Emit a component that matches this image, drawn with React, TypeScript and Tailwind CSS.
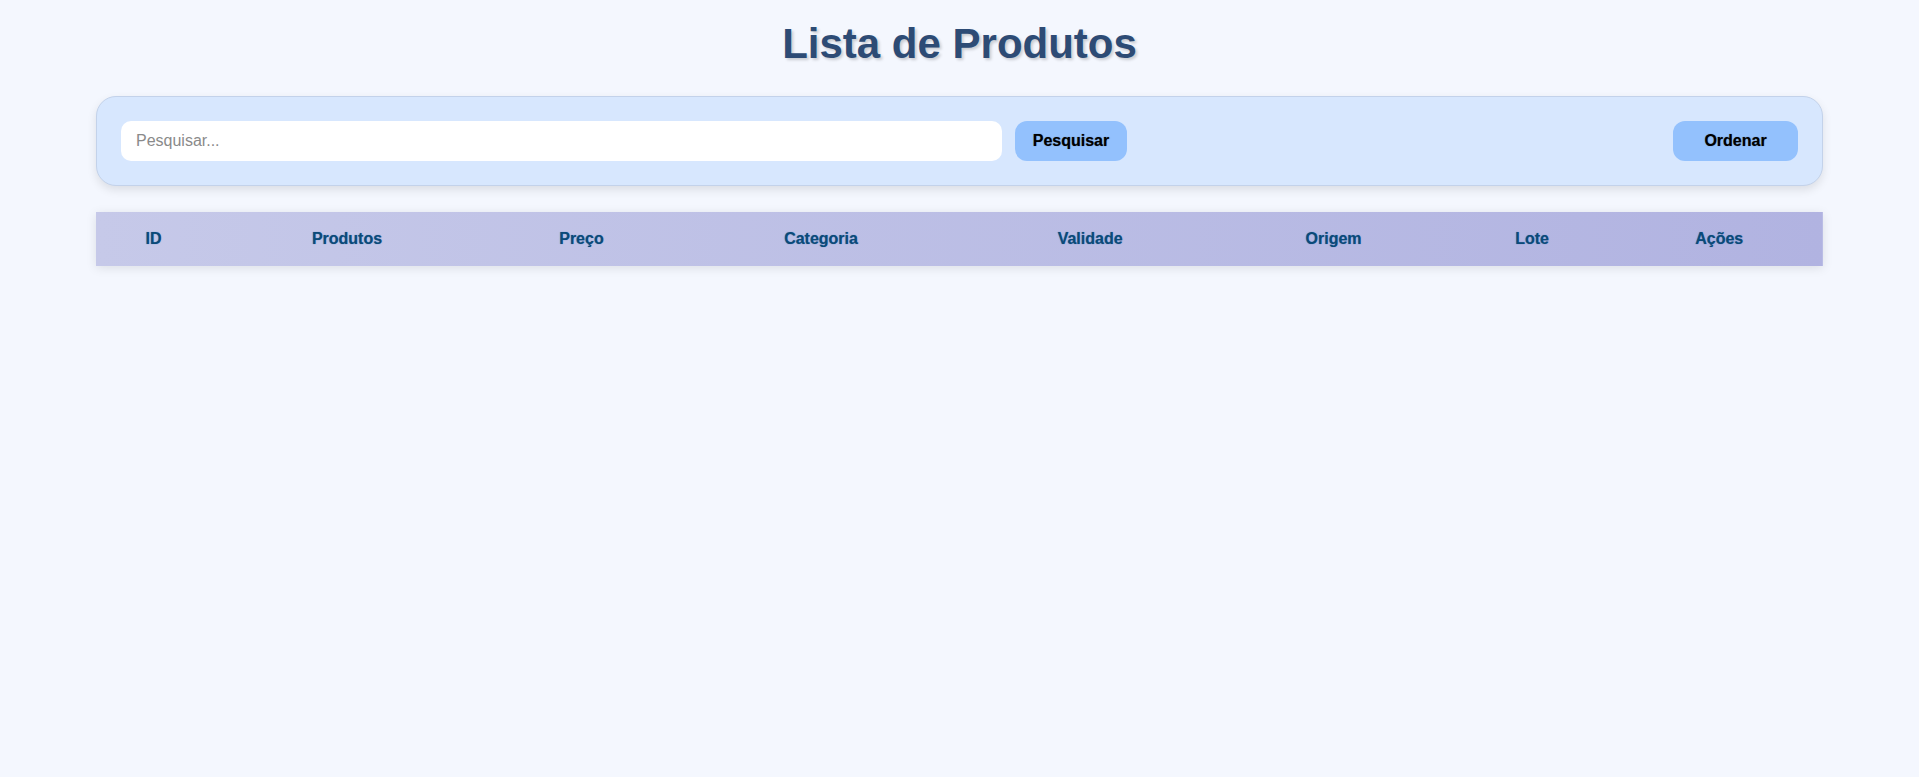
const columns = ["ID", "Produtos", "Preço", "Categoria", "Validade", "Origem", "Lote", "Ações"];

const App = () => {
  return (
    <div className="min-h-screen bg-[#f4f7fe] pt-[20px] font-['Liberation_Sans',Arial,sans-serif]">
      <h1 className="mb-[28px] text-center text-[42px] leading-[1.15] font-bold text-[#2d4b75] [text-shadow:2px_2px_3px_rgba(0,0,0,0.18)]">
        Lista de Produtos
      </h1>

      <div className="mx-auto w-[90%] rounded-[20px] border border-[#c3d2ea] bg-[#d7e7fe] p-6 shadow-[0_4px_10px_rgba(0,0,0,0.1)]">
        <div className="flex items-center">
          <input
            type="text"
            placeholder="Pesquisar..."
            className="h-10 w-[881px] rounded-[10px] bg-white px-[15px] text-base text-[#333] outline-none placeholder:text-[#8a8a8a]"
          />
          <button className="ml-[13px] h-10 w-[112px] rounded-xl bg-[#93c1fd] text-base font-bold text-black [text-shadow:0_0_1px_rgba(0,0,0,0.5)]">
            Pesquisar
          </button>
          <button className="ml-auto h-10 w-[125px] rounded-xl bg-[#93c1fd] text-base font-bold text-black [text-shadow:0_0_1px_rgba(0,0,0,0.5)]">
            Ordenar
          </button>
        </div>
      </div>

      <div className="mx-auto mt-[26px] w-[90%] shadow-[0_2px_10px_rgba(0,0,0,0.1)]">
        <table className="w-full border-collapse">
          <thead>
            <tr className="bg-gradient-to-r from-[#c6c9e9] to-[#b1b3e1]">
              {columns.map((col) => (
                <th
                  key={col}
                  className="px-3 py-[15px] text-center text-base font-bold text-[#0b4a78] [text-shadow:0_0_1px_rgba(0,80,160,0.6)]"
                >
                  {col}
                </th>
              ))}
            </tr>
          </thead>
          <tbody></tbody>
        </table>
      </div>
    </div>
  );
};

export default App;
